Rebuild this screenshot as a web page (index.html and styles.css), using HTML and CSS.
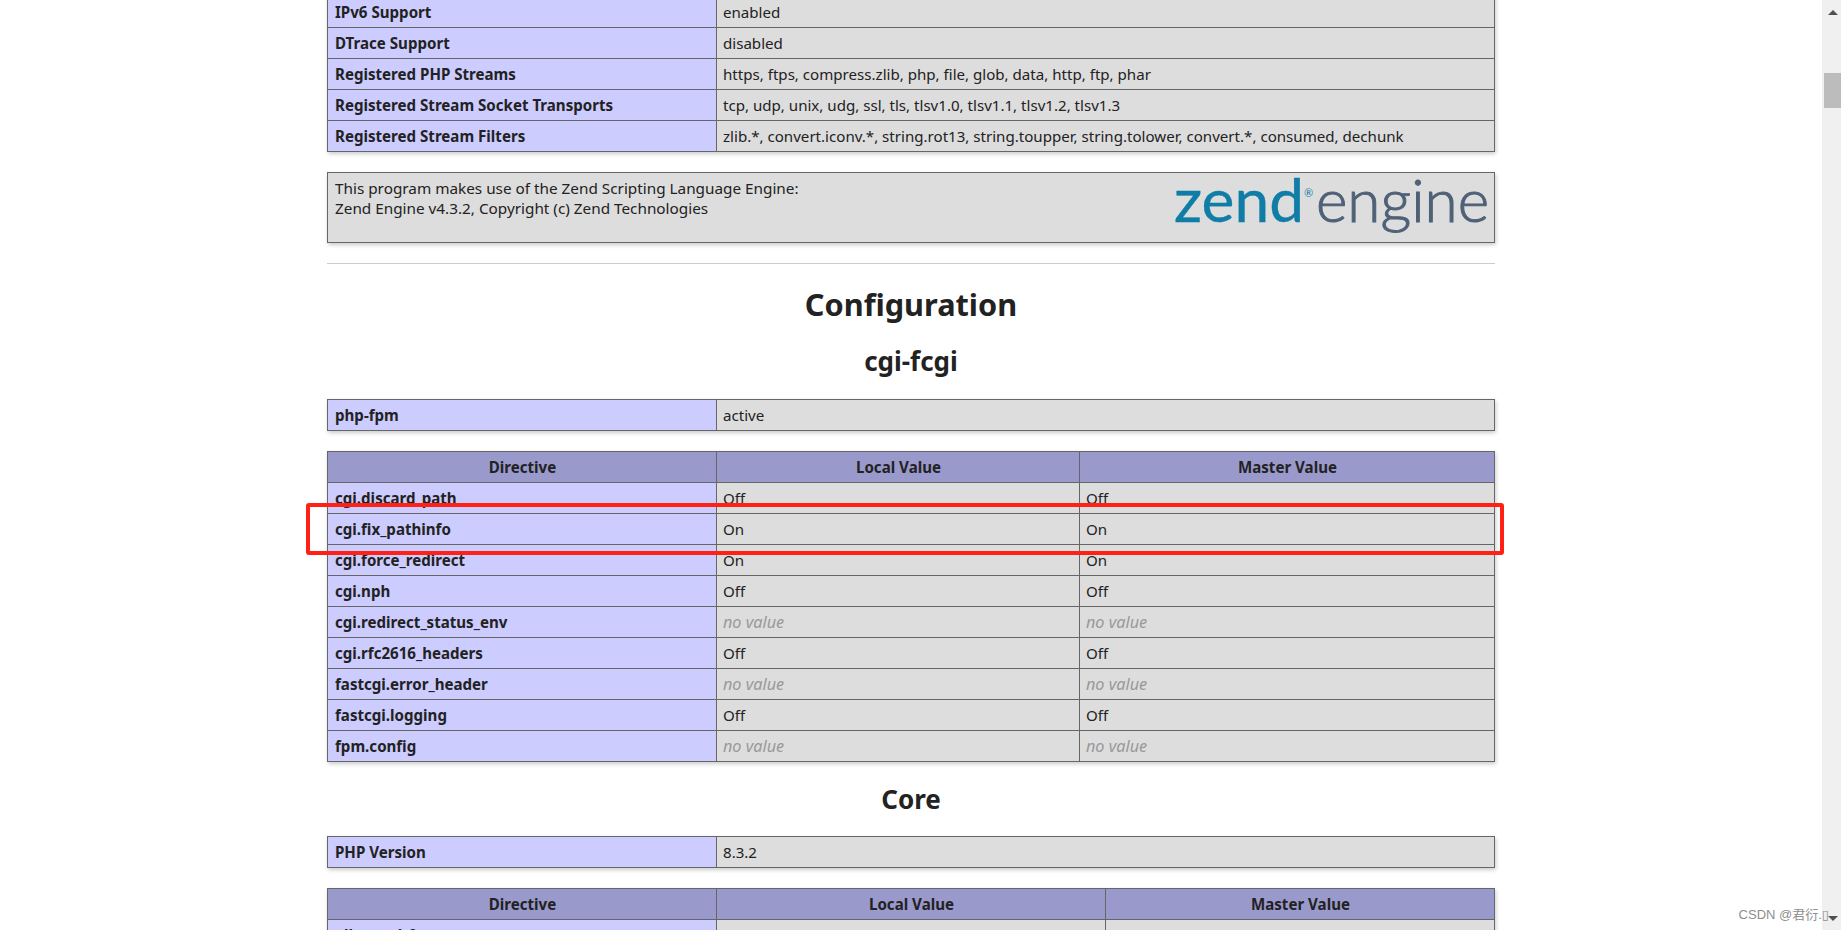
FILE: index.html
```html
<!DOCTYPE html>
<html lang="en">
<head>
<meta charset="utf-8">
<title>phpinfo()</title>
<link rel="stylesheet" href="styles.css">
</head>
<body>
<main class="page">
<div class="center">
<table class="info two">
<tr><td class="e">IPv6 Support</td><td class="v">enabled</td></tr>
<tr><td class="e">DTrace Support</td><td class="v">disabled</td></tr>
<tr><td class="e">Registered PHP Streams</td><td class="v">https, ftps, compress.zlib, php, file, glob, data, http, ftp, phar</td></tr>
<tr><td class="e">Registered Stream Socket Transports</td><td class="v">tcp, udp, unix, udg, ssl, tls, tlsv1.0, tlsv1.1, tlsv1.2, tlsv1.3</td></tr>
<tr><td class="e">Registered Stream Filters</td><td class="v">zlib.*, convert.iconv.*, string.rot13, string.toupper, string.tolower, convert.*, consumed, dechunk</td></tr>
</table>
<div class="zend">
<svg class="zend-logo" viewBox="0 0 318 60" width="318" height="60" role="img" aria-label="zend engine">
<text class="logo-zend" x="2" y="44" textLength="130" lengthAdjust="spacingAndGlyphs">zend</text>
<text class="logo-r" x="132" y="19">®</text>
<text class="logo-engine" x="144" y="44" textLength="173" lengthAdjust="spacingAndGlyphs">engine</text>
</svg>
This program makes use of the Zend Scripting Language Engine:<br>Zend Engine v4.3.2, Copyright (c) Zend Technologies
</div>
<hr class="rule">
<h1 class="title">Configuration</h1>
<h2 class="module first">cgi-fcgi</h2>
<table class="info two">
<tr><td class="e">php-fpm</td><td class="v">active</td></tr>
</table>
<table class="info three">
<tr class="h"><th>Directive</th><th>Local Value</th><th>Master Value</th></tr>
<tr><td class="e">cgi.discard_path</td><td class="v">Off</td><td class="v">Off</td></tr>
<tr><td class="e">cgi.fix_pathinfo</td><td class="v">On</td><td class="v">On</td></tr>
<tr><td class="e">cgi.force_redirect</td><td class="v">On</td><td class="v">On</td></tr>
<tr><td class="e">cgi.nph</td><td class="v">Off</td><td class="v">Off</td></tr>
<tr><td class="e">cgi.redirect_status_env</td><td class="v"><i class="none">no value</i></td><td class="v"><i class="none">no value</i></td></tr>
<tr><td class="e">cgi.rfc2616_headers</td><td class="v">Off</td><td class="v">Off</td></tr>
<tr><td class="e">fastcgi.error_header</td><td class="v"><i class="none">no value</i></td><td class="v"><i class="none">no value</i></td></tr>
<tr><td class="e">fastcgi.logging</td><td class="v">Off</td><td class="v">Off</td></tr>
<tr><td class="e">fpm.config</td><td class="v"><i class="none">no value</i></td><td class="v"><i class="none">no value</i></td></tr>
</table>
<h2 class="module">Core</h2>
<table class="info two">
<tr><td class="e">PHP Version</td><td class="v">8.3.2</td></tr>
</table>
<table class="info three-wide">
<tr class="h"><th>Directive</th><th>Local Value</th><th>Master Value</th></tr>
<tr><td class="e">allow_url_fopen</td><td class="v">On</td><td class="v">On</td></tr>
</table>
</div>
</main>
<aside class="scrollbar">
<span class="arrow-up"></span>
<span class="thumb"></span>
<span class="arrow-down"></span>
</aside>
<div class="highlight"></div>
<div class="watermark">CSDN @君衍.&#9647;</div>
</body>
</html>
```

FILE: styles.css
```css
* { box-sizing: border-box; }
html, body { margin: 0; height: 930px; overflow: hidden; background: #fff; }
body {
  display: flex;
  position: relative;
  color: #222;
  font-family: "Noto Sans", "Open Sans", sans-serif;
  font-size: 15.1px;
}
.page { flex: 1; min-width: 0; height: 930px; overflow: hidden; }
.center { width: 1168px; margin: -4px auto 0; }

.info {
  width: 1168px;
  table-layout: fixed;
  border-collapse: collapse;
  box-shadow: 1px 2px 4px #ccc;
  margin-bottom: 20px;
}
.info td, .info th {
  height: 31px;
  padding: 0 6px 0 7px;
  border: 1px solid #666;
  line-height: 20px;
  white-space: nowrap;
}
.info td.v { padding-left: 6px; }
.e { width: 389px; background: #ccf; font-weight: 700; }
.v { background: #ddd; }
.h th { background: #99c; font-weight: 700; text-align: center; }
.none { color: #999; font-size: 16.2px; }

.three th:nth-child(1) { width: 389px; }
.three th:nth-child(2) { width: 363px; }
.three-wide th:nth-child(1) { width: 389px; }
.three-wide th:nth-child(2) { width: 389px; }
.two td:first-child { width: 389px; }

.zend {
  height: 71px;
  padding: 5px 6px 5px 7px;
  border: 1px solid #666;
  background: #ddd;
  box-shadow: 1px 2px 4px #ccc;
  line-height: 20px;
  font-size: 15.3px;
}
.zend-logo { float: right; margin-right: -2px; overflow: visible; }
.logo-zend { font-family: Lato, sans-serif; font-size: 60px; font-weight: 400; fill: #0f7da6; stroke: #0f7da6; stroke-width: .4px; }
.logo-engine { font-family: Lato, sans-serif; font-size: 60px; font-weight: 300; fill: #4f6177; stroke: #4f6177; stroke-width: 1px; }
.logo-r { font-family: Lato, sans-serif; font-size: 11px; fill: #0f7da6; }

.rule { height: 1px; margin: 20px 0 0; border: 0; background: #ccc; }
.title { margin: 19px 0 0; text-align: center; font-size: 30.7px; line-height: 42px; font-weight: 700; }
.module { margin: 20px 0 20px; text-align: center; font-size: 26px; line-height: 34px; font-weight: 700; }
.module.first { margin: 19px 0 21px; }

.scrollbar {
  flex: 0 0 19px;
  height: 930px;
  background: #f0f0f0;
  display: flex;
  flex-direction: column;
  align-items: flex-end;
  padding-top: 10px;
}
.arrow-up, .arrow-down { width: 0; height: 0; align-self: center; margin-left: 2px; border-left: 5px solid transparent; border-right: 5px solid transparent; }
.arrow-up { border-bottom: 5px solid #505050; }
.arrow-down { margin-top: auto; margin-bottom: 9px; border-top: 5px solid #505050; }
.thumb { width: 17px; height: 35px; margin-top: 58px; background: #bcbcbc; }

.highlight {
  position: absolute;
  left: 306px;
  top: 503px;
  width: 1198px;
  height: 52px;
  border: 4px solid #ff2116;
  border-radius: 3px;
}
.watermark {
  position: absolute;
  right: 12px;
  top: 906px;
  font-family: "Liberation Sans", "Noto Sans CJK SC", "DejaVu Sans", sans-serif;
  font-size: 13px;
  line-height: 17px;
  color: #8e8e8e;
}
```
